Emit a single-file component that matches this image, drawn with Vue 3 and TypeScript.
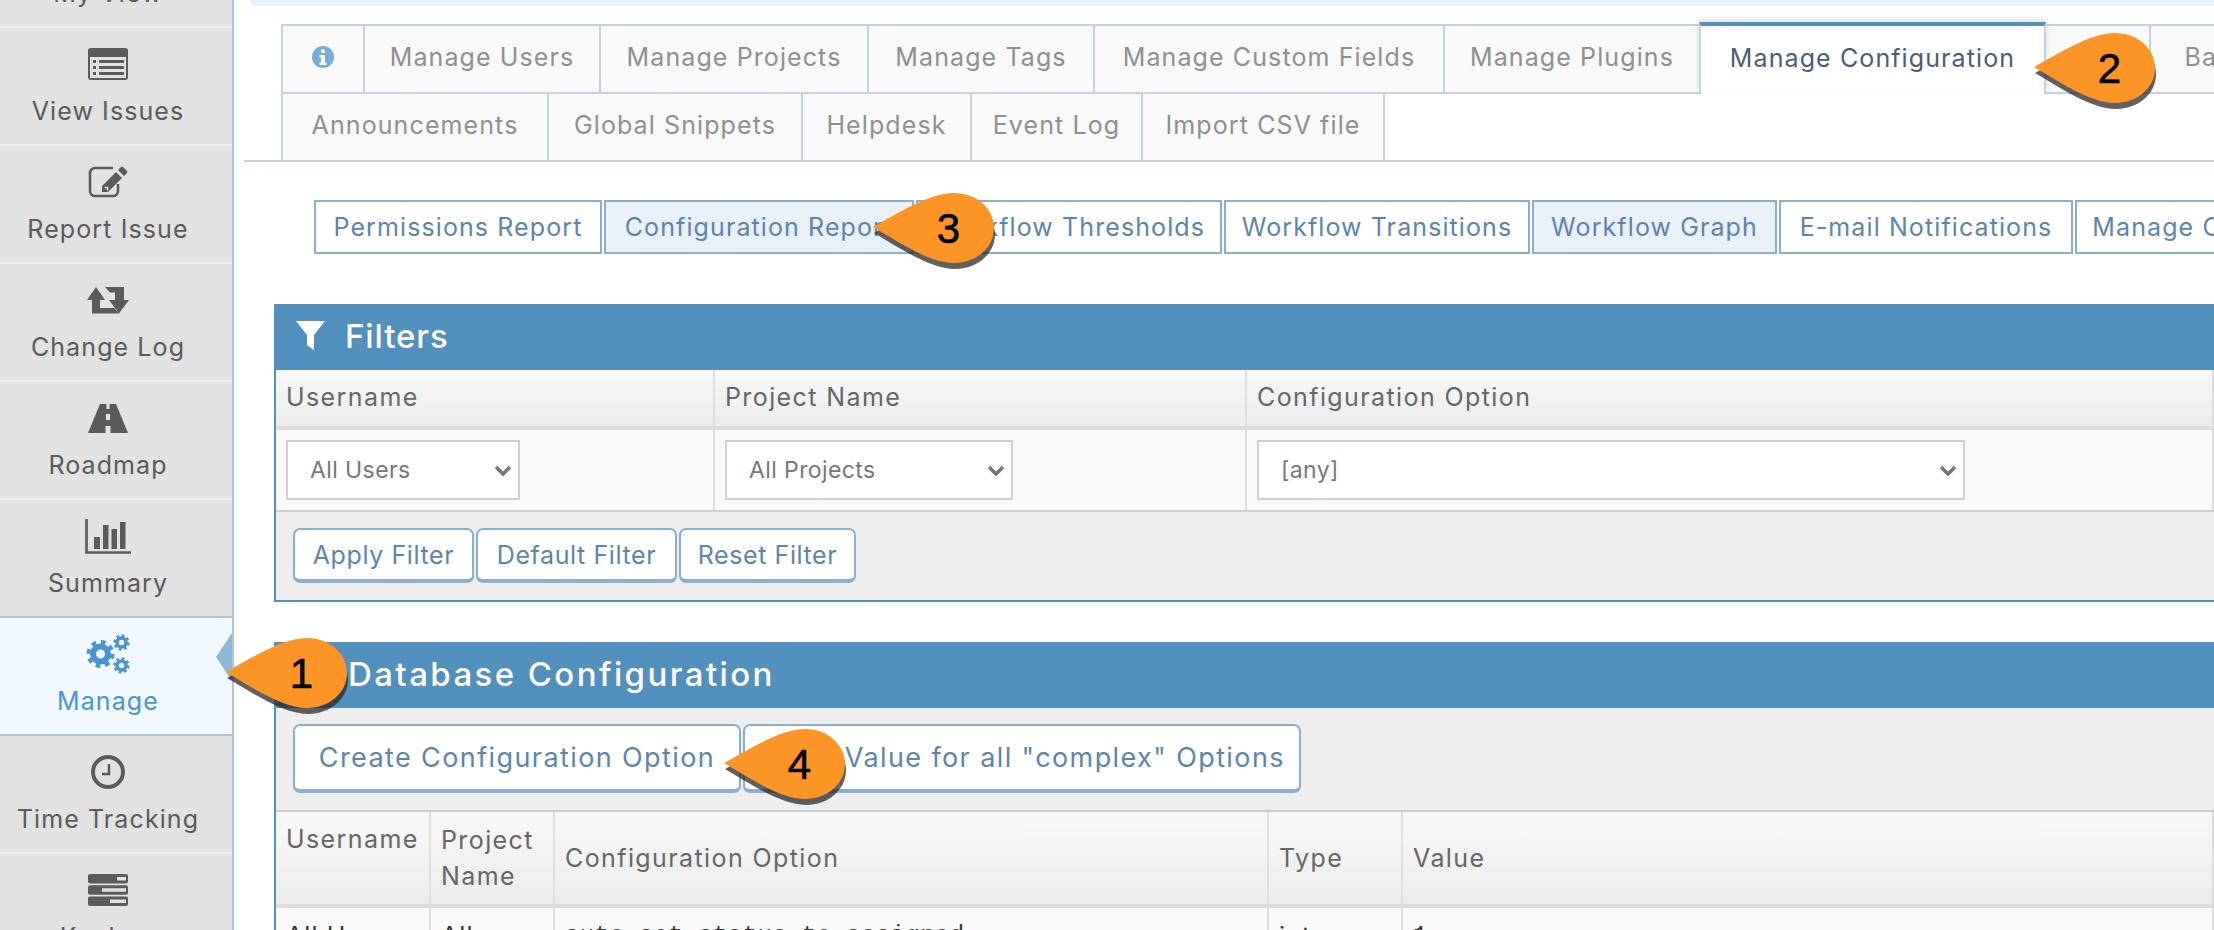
<template>
  <div class="page">
    <aside class="sidebar">
      <a
        v-for="item in navItems"
        :key="item.label"
        class="nav-item"
        :class="{ active: item.active }"
      >
        <span class="nav-icon">
          <svg v-if="item.icon === 'home'" width="40" height="32" viewBox="0 0 40 32"><path d="M20 2 2 18h6v12h24V18h6z" fill="currentColor" /></svg>
          <svg v-else-if="item.icon === 'list'" width="40" height="32" viewBox="0 0 40 32">
            <rect width="40" height="32" rx="3" fill="currentColor" />
            <rect x="2" y="9" width="36" height="21" fill="#e2e2e2" />
            <path d="M5 12h3v3H5zM5 18h3v3H5zM5 24h3v3H5zM11 12h25v3H11zM11 18h25v3H11zM11 24h25v3H11z" fill="currentColor" />
          </svg>
          <svg v-else-if="item.icon === 'edit'" width="40" height="32" viewBox="0 0 40 32">
            <path d="M25 2H7a5 5 0 0 0-5 5v18a5 5 0 0 0 5 5h18a5 5 0 0 0 5-5v-7" fill="none" stroke="currentColor" stroke-width="2.6" />
            <path d="M14 20 28 6l6 6-14 14h-6zM30 4l3-3a1.5 1.5 0 0 1 2 0l4 4a1.5 1.5 0 0 1 0 2l-3 3z" fill="currentColor" />
            <path d="M16.5 21.5h3v3" fill="none" stroke="#e2e2e2" stroke-width="1.5" />
          </svg>
          <svg v-else-if="item.icon === 'retweet'" width="44" height="27" viewBox="0 0 44 27">
            <path d="M10 0 19 13h-5v8h14l5 5.500H6V13H1zM19 0h19v13h5l-10 13.500L23 13h6V5.500H24z" fill="currentColor" />
          </svg>
          <svg v-else-if="item.icon === 'road'" width="40" height="29" viewBox="0 0 40 29">
            <path d="M12 0h16l12 29H0z" fill="currentColor" />
            <path d="M18.500 0h3v5h-3zM18 10h4v6h-4zM17.500 22h5v7h-5z" fill="#e2e2e2" />
          </svg>
          <svg v-else-if="item.icon === 'chart'" width="46" height="35" viewBox="0 0 46 35">
            <path d="M1.500 0v33.500H46" fill="none" stroke="currentColor" stroke-width="2.600" />
            <path d="M9 18h6v12H9zM18 6h5.500v24H18zM26.500 10H32v20h-5.500zM35 3h5.500v27H35z" fill="currentColor" />
          </svg>
          <svg v-else-if="item.icon === 'cogs'" width="44" height="40" viewBox="0 0 44 40">
            <g fill="none" stroke="currentColor">
              <circle cx="14.500" cy="20" r="7.500" stroke-width="6" />
              <circle cx="14.500" cy="20" r="12" stroke-width="4" stroke-dasharray="4.700 4.720" />
              <circle cx="35.500" cy="8.500" r="4.500" stroke-width="3.500" />
              <circle cx="35.500" cy="8.500" r="6.800" stroke-width="2.800" stroke-dasharray="2.670 2.670" />
              <circle cx="35.500" cy="31.500" r="4.500" stroke-width="3.500" />
              <circle cx="35.500" cy="31.500" r="6.800" stroke-width="2.800" stroke-dasharray="2.670 2.670" />
            </g>
          </svg>
          <svg v-else-if="item.icon === 'clock'" width="34" height="34" viewBox="0 0 34 34">
            <circle cx="17" cy="17" r="15" fill="none" stroke="currentColor" stroke-width="4" />
            <path d="M18 9v10h-7" fill="none" stroke="currentColor" stroke-width="2.500" />
          </svg>
          <svg v-else-if="item.icon === 'tasks'" width="40" height="32" viewBox="0 0 40 32">
            <rect y="0" width="40" height="9.500" rx="2" fill="currentColor" />
            <rect y="11.250" width="40" height="9.500" rx="2" fill="currentColor" />
            <rect y="22.500" width="40" height="9.500" rx="2" fill="currentColor" />
            <path d="M29 3h9v3.500h-9zM14 14.250h24v3.500H14zM22 25.500h16V29H22z" fill="#e2e2e2" />
          </svg>
        </span>
        <span class="nav-label">{{ item.label }}</span>
      </a>
      <span class="nav-arrow"></span>
    </aside>

    <main class="content">
      <div class="top-strip"></div>

      <nav class="tabs">
        <div v-for="(row, r) in tabRows" :key="r" class="tab-row">
          <a
            v-for="tab in row"
            :key="tab.label"
            class="tab"
            :class="{ active: tab.active }"
            :style="{ width: tab.width + 'px' }"
          >
            <svg v-if="tab.info" width="22" height="22" viewBox="0 0 22 22">
              <circle cx="11" cy="11" r="11" fill="#78acdb" />
              <path d="M9 3.500h4v3.500H9zM7.500 9H13v7.500h1.500V19h-7v-2.500H9V11.500H7.500z" fill="#fff" />
            </svg>
            <template v-else>{{ tab.label }}</template>
          </a>
        </div>
      </nav>

      <div class="sub-nav">
        <a
          v-for="link in subLinks"
          :key="link.label"
          class="sub-link"
          :class="{ current: link.current }"
          :style="{ width: link.width + 'px' }"
        >{{ link.label }}</a>
      </div>

      <section class="panel filters">
        <header class="panel-head">
          <svg class="funnel" width="29" height="29" viewBox="0 0 29 29">
            <path d="M0 0h29L18 14v15l-7-5V14z" fill="#fff" />
          </svg>
          <h2>Filters</h2>
        </header>
        <div class="filter-grid head">
          <div>Username</div>
          <div>Project Name</div>
          <div>Configuration Option</div>
        </div>
        <div class="filter-grid fields">
          <div v-for="field in filterFields" :key="field.label">
            <label class="select-box" :style="{ width: field.width + 'px' }">
              <select>
                <option>{{ field.label }}</option>
              </select>
              <svg width="18" height="12" viewBox="0 0 18 12">
                <path d="M2 2l7 7 7-7" fill="none" stroke="#777" stroke-width="3.600" />
              </svg>
            </label>
          </div>
        </div>
        <div class="panel-actions">
          <button
            v-for="btn in filterButtons"
            :key="btn.label"
            class="btn small"
            :style="{ width: btn.width + 'px' }"
          >{{ btn.label }}</button>
        </div>
      </section>

      <section class="panel database">
        <header class="panel-head">
          <h2>Database Configuration</h2>
        </header>
        <div class="panel-actions tall">
          <button
            v-for="btn in configButtons"
            :key="btn.label"
            class="btn"
            :style="{ width: btn.width + 'px' }"
          >{{ btn.label }}</button>
        </div>
        <div class="config-grid head">
          <div class="top">Username</div>
          <div class="wrap">Project<br />Name</div>
          <div>Configuration Option</div>
          <div>Type</div>
          <div>Value</div>
        </div>
        <div class="config-grid body">
          <div>All Users</div>
          <div>All</div>
          <div class="mono">auto_set_status_to_assigned</div>
          <div>integer</div>
          <div class="mono">1</div>
        </div>
      </section>
    </main>

    <svg
      v-for="mark in callouts"
      :key="mark.n"
      class="callout"
      :style="{ left: mark.x + 'px', top: mark.y + 'px' }"
      width="126"
      height="80"
      viewBox="0 0 126 80"
    >
      <path :d="drop" transform="translate(1 6)" fill="#222" fill-opacity=".72" />
      <path :d="drop" fill="#fd9426" />
      <text x="76" y="50" text-anchor="middle" class="callout-num">{{ mark.n }}</text>
    </svg>
  </div>
</template>

<script setup lang="ts">
interface NavItem {
  label: string
  icon: string
  active?: boolean
}

interface Tab {
  label: string
  width: number
  active?: boolean
  info?: boolean
}

const navItems: NavItem[] = [
  { label: 'My View', icon: 'home' },
  { label: 'View Issues', icon: 'list' },
  { label: 'Report Issue', icon: 'edit' },
  { label: 'Change Log', icon: 'retweet' },
  { label: 'Roadmap', icon: 'road' },
  { label: 'Summary', icon: 'chart' },
  { label: 'Manage', icon: 'cogs', active: true },
  { label: 'Time Tracking', icon: 'clock' },
  { label: 'Kanban', icon: 'tasks' }
]

// widths are fixed so the wraps line up with the design
const tabRows: Tab[][] = [
  [
    { label: 'Info', width: 84, info: true },
    { label: 'Manage Users', width: 238 },
    { label: 'Manage Projects', width: 270 },
    { label: 'Manage Tags', width: 228 },
    { label: 'Manage Custom Fields', width: 352 },
    { label: 'Manage Plugins', width: 258 },
    { label: 'Manage Configuration', width: 347, active: true },
    { label: '', width: 107 },
    { label: 'Backup', width: 166 }
  ],
  [
    { label: 'Announcements', width: 268 },
    { label: 'Global Snippets', width: 256 },
    { label: 'Helpdesk', width: 171 },
    { label: 'Event Log', width: 173 },
    { label: 'Import CSV file', width: 244 }
  ]
]

const subLinks = [
  { label: 'Permissions Report', width: 288 },
  { label: 'Configuration Report', width: 310, current: true },
  { label: 'Workflow Thresholds', width: 306 },
  { label: 'Workflow Transitions', width: 306 },
  { label: 'Workflow Graph', width: 245, current: true },
  { label: 'E-mail Notifications', width: 294 },
  { label: 'Manage Configuration', width: 320 }
]

const filterFields = [
  { label: 'All Users', width: 234 },
  { label: 'All Projects', width: 288 },
  { label: '[any]', width: 708 }
]

const filterButtons = [
  { label: 'Apply Filter', width: 181 },
  { label: 'Default Filter', width: 201 },
  { label: 'Reset Filter', width: 177 }
]

const configButtons = [
  { label: 'Create Configuration Option', width: 448 },
  { label: 'Show Value for all "complex" Options', width: 558 }
]

const drop =
  'M0 34C24 21 56 0 81 0c22 0 40 15 40 35s-18 35-40 35C56 70 24 48 0 34z'

const callouts = [
  { n: 1, x: 226, y: 638 },
  { n: 2, x: 2034, y: 33 },
  { n: 3, x: 873, y: 193 },
  { n: 4, x: 724, y: 729 }
]
</script>

<style>
html,
body {
  margin: 0;
  overflow: hidden;
  background: #fff;
}
</style>

<style scoped>
.page {
  position: relative;
  display: flex;
  width: 2214px;
  height: 930px;
  overflow: hidden;
  background: #fff;
  font-family: Inter, "Open Sans", sans-serif;
  font-size: 25px;
  letter-spacing: 1.1px;
  color: #666;
}
.sidebar {
  position: relative;
  flex: none;
  width: 234px;
  height: 930px;
  box-sizing: border-box;
  border-right: 2px solid #a9c8df;
}
.nav-item {
  display: flex;
  flex-direction: column;
  align-items: center;
  box-sizing: border-box;
  height: 118px;
  padding: 16px 16px 0 0;
  background: #e2e2e2;
  border-bottom: 2px solid #f0f0f0;
  color: #5b5b5b;
}
.nav-item:first-child {
  margin-top: -90px;
}
.nav-item.active {
  background: #f1f9ff;
  color: #4a94cf;
  border-bottom-color: #a9c8df;
  box-shadow: 0 -2px 0 #a9c8df;
  position: relative;
}
.nav-icon {
  display: flex;
  align-items: center;
  justify-content: center;
  height: 40px;
}
.nav-label {
  margin-top: 12px;
  line-height: 30px;
  white-space: nowrap;
}
.nav-arrow {
  position: absolute;
  left: 216px;
  top: 633px;
  width: 16px;
  height: 48px;
  background: #8fb8d5;
  clip-path: polygon(100% 0, 0 50%, 100% 100%);
}
.content {
  flex: 1;
  min-width: 0;
}
.top-strip {
  height: 6px;
  margin-left: 16px;
  background: #e8f0f8;
  border-bottom-left-radius: 8px;
}
.tabs {
  margin: 18px 0 0 10px;
  padding-left: 37px;
  border-bottom: 2px solid #c4d2e2;
}
.tab-row {
  display: flex;
  height: 68px;
}
.tab {
  display: flex;
  flex: none;
  align-items: center;
  justify-content: center;
  box-sizing: border-box;
  height: 70px;
  margin-right: -2px;
  padding-bottom: 4px;
  background: #f9f9f9;
  border: 2px solid #c4d2e2;
  color: #8f8f8f;
  white-space: nowrap;
}
.tab-row:last-child .tab {
  height: 68px;
  border-bottom: 0;
}
.tab.active {
  position: relative;
  z-index: 1;
  height: 72px;
  margin-top: -2px;
  background: #fff;
  border-top: 4px solid #5191be;
  border-bottom: 0;
  color: #4c5d75;
  box-shadow: 0 -3px 6px rgba(0, 0, 0, 0.12);
}
.sub-nav {
  display: flex;
  gap: 2px;
  margin: 38px 0 0 80px;
}
.sub-link {
  display: flex;
  flex: none;
  align-items: center;
  justify-content: center;
  box-sizing: border-box;
  height: 54px;
  background: #fff;
  border: 2px solid #8aaecd;
  color: #5e84a8;
  white-space: nowrap;
}
.sub-link.current {
  background: #e8f0f8;
}
.panel {
  margin-left: 40px;
  border-left: 2px solid #5290bd;
}
.filters {
  margin-top: 50px;
  border-bottom: 2px solid #5290bd;
}
.database {
  margin-top: 40px;
}
.panel-head {
  display: flex;
  align-items: center;
  box-sizing: border-box;
  height: 66px;
  margin-left: -2px;
  padding: 0 0 3px 22px;
  background: #5290bd;
  color: #fff;
}
.panel-head h2 {
  margin: 0;
  font-size: 33px;
  font-weight: 500;
  letter-spacing: 0.9px;
}
.database .panel-head h2 {
  padding-left: 52px;
  letter-spacing: 2.4px;
}
.funnel {
  margin-right: 20px;
}
.filter-grid,
.config-grid {
  display: grid;
}
.filter-grid {
  grid-template-columns: 439px 532px 1fr;
}
.filter-grid > div,
.config-grid > div {
  box-sizing: border-box;
  padding: 0 10px;
  border-right: 2px solid #dedede;
}
.head {
  box-sizing: border-box;
  background: linear-gradient(#f8f8f8, #ececec);
  border-bottom: 4px solid #dddddd;
  color: #666;
  letter-spacing: 1.4px;
}
.filter-grid.head {
  height: 60px;
}
.filter-grid.head > div {
  line-height: 54px;
}
.fields {
  box-sizing: border-box;
  height: 82px;
  background: #f9f9f9;
  border-bottom: 2px solid #d0d0d0;
}
.fields > div {
  padding-top: 10px !important;
}
.select-box {
  position: relative;
  display: block;
  height: 60px;
}
.select-box select {
  width: 100%;
  height: 100%;
  box-sizing: border-box;
  padding: 0 22px;
  appearance: none;
  background: #fff;
  border: 2px solid #d0d0d0;
  border-radius: 0;
  font: inherit;
  font-size: 23px;
  color: #777;
  letter-spacing: 0.4px;
}
.select-box svg {
  position: absolute;
  top: 25px;
  right: 8px;
}
.panel-actions {
  display: flex;
  gap: 2px;
  height: 88px;
  box-sizing: border-box;
  padding: 16px 0 0 17px;
  background: #eeeeee;
}
.panel-actions.tall {
  height: 104px;
  border-bottom: 2px solid #cccccc;
}
.btn {
  flex: none;
  height: 55px;
  padding: 0;
  box-sizing: border-box;
  background: #fff;
  border: 2px solid #8aaecd;
  border-bottom-width: 4px;
  border-radius: 7px;
  font: inherit;
  color: #5e84a8;
  letter-spacing: 0.6px;
  white-space: nowrap;
}
.tall .btn {
  height: 69px;
  font-size: 27px;
  letter-spacing: 1.4px;
}
.config-grid {
  grid-template-columns: 155px 124px 714px 134px 1fr;
}
.config-grid.head {
  height: 96px;
  line-height: 36px;
}
.config-grid.head > div {
  display: flex;
  align-items: center;
}
.config-grid.head > .top {
  align-items: flex-start;
  padding-top: 9px;
}
.config-grid.body {
  height: 60px;
  background: #f9f9f9;
  color: #333;
  line-height: 36px;
}
.config-grid.body > div {
  padding-top: 10px;
}
.mono {
  font-family: "Liberation Mono", monospace;
  font-size: 24px;
  letter-spacing: 0.4px;
}
.callout {
  position: absolute;
  z-index: 5;
}
.callout-num {
  font-family: "Liberation Sans", Arial, sans-serif;
  font-size: 42px;
  fill: #000;
  stroke: #000;
  stroke-width: 0.6px;
}
</style>
